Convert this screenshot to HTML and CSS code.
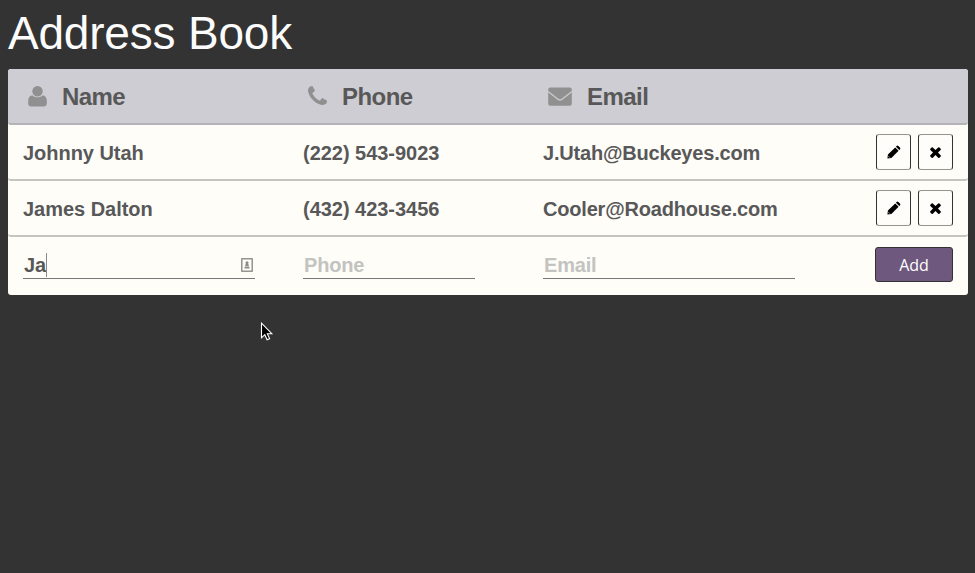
FILE: index.html
```html
<!DOCTYPE html>
<html lang="en">
<head>
<meta charset="utf-8">
<title>Address Book</title>
<link rel="stylesheet" href="styles.css">
</head>
<body>
<h1 class="title">Address Book</h1>
<main class="book">
  <div class="row head">
    <div class="heading"><svg class="icon user" viewBox="0 0 19 21"><circle cx="9.5" cy="5.3" r="5.2"/><path d="M4.2 9.2C1.300 9.700.2 12 .2 15v2.500c0 2 1.200 3 3.200 3h12.200c2 0 3.200-1 3.200-3V15c0-3-1.100-5.300-4-5.800-2.900 2.700-7.700 2.700-10.600 0z"/></svg><span class="label">Name</span></div>
    <div class="heading"><svg class="icon phone" viewBox="192 128 1408 1408"><path d="M1600 1240q0 27-10 70.500t-21 68.500q-21 50-122 106-94 51-186 51-27 0-53-3.500t-57.500-12.500-47-14.500-55.500-20.500-49-18q-98-35-175-83-127-79-264-216t-216-264q-48-77-83-175-3-9-18-49t-20.500-55.500-14.500-47-12.500-57.500-3.500-53q0-92 51-186 56-101 106-122 25-11 68.500-21t70.500-10q14 0 21 3 18 6 53 76 11 19 30 54t35 63.500 31 53.500q3 4 17.500 25t21.500 35.500 7 28.500q0 20-28.500 50t-62 55-62 53-28.500 46q0 9 5 22.500t8.500 20.500 14 24 11.500 19q76 137 174 235t235 174q2 1 19 11.500t24 14 20.500 8.500 22.500 5q18 0 46-28.500t53-62 55-62 50-28.500q14 0 28.500 7t35.500 21.500 25 17.500q25 15 53.500 31t63.500 35 54 30q70 35 76 53 3 7 3 21z"/></svg><span class="label">Phone</span></div>
    <div class="heading"><svg class="icon mail" viewBox="0 0 24 19"><rect x=".2" y=".4" width="23.600" height="18.300" rx="2"/><path class="flap" d="M0 4.500l10 7.700q2 1.500 4 0L24 4.500"/></svg><span class="label">Email</span></div>
  </div>
  <div class="row">
    <div class="cell">Johnny Utah</div><div class="cell">(222) 543-9023</div><div class="cell mailto">J.Utah@Buckeyes.com</div>
    <div class="actions">
      <button class="square" aria-label="Edit"><svg class="pencil" viewBox="0 0 14 14"><path d="M.4 13.600l.5-4 7.300-7.200 3.400 3.400-7.200 7.300zM8.900 1.700l.7-.7q.9-.8 1.800 0l1.600 1.600q.8.900 0 1.800l-.7.700z"/><path class="cut" d="M1.300 11.100l1.600 1.600"/></svg></button>
      <button class="square" aria-label="Delete"><svg class="cross" viewBox="302 238 1188 1316"><path d="M1490 1322q0 40-28 68l-136 136q-28 28-68 28t-68-28l-294-294-294 294q-28 28-68 28t-68-28l-136-136q-28-28-28-68t28-68l294-294-294-294q-28-28-28-68t28-68l136-136q28-28 68-28t68 28l294 294 294-294q28-28 68-28t68 28l136 136q28 28 28 68t-28 68l-294 294 294 294q28 28 28 68z"/></svg></button>
    </div>
  </div>
  <div class="row">
    <div class="cell">James Dalton</div><div class="cell">(432) 423-3456</div><div class="cell mailto">Cooler@Roadhouse.com</div>
    <div class="actions">
      <button class="square" aria-label="Edit"><svg class="pencil" viewBox="0 0 14 14"><path d="M.4 13.600l.5-4 7.300-7.200 3.400 3.400-7.200 7.300zM8.900 1.700l.7-.7q.9-.8 1.800 0l1.600 1.600q.8.900 0 1.800l-.7.700z"/><path class="cut" d="M1.300 11.100l1.600 1.600"/></svg></button>
      <button class="square" aria-label="Delete"><svg class="cross" viewBox="302 238 1188 1316"><path d="M1490 1322q0 40-28 68l-136 136q-28 28-68 28t-68-28l-294-294-294 294q-28 28-68 28t-68-28l-136-136q-28-28-28-68t28-68l294-294-294-294q-28-28-28-68t28-68l136-136q28-28 68-28t68 28l294 294 294-294q28-28 68-28t68 28l136 136q28 28 28 68t-28 68l-294 294 294 294q28 28 28 68z"/></svg></button>
    </div>
  </div>
  <div class="row form">
    <div class="field name"><span>Ja</span><i class="caret"></i><svg class="autofill" viewBox="0 0 12 14"><rect class="frame" x=".8" y=".8" width="10.400" height="12.400"/><circle cx="6" cy="4.700" r="1.500"/><path d="M4.700 6h2.600l.8 2.500H3.900zM3.500 9h5v1.500h-5z"/></svg></div>
    <div class="field tel">Phone</div>
    <div class="field email">Email</div>
    <div class="actions"><button class="add">Add</button></div>
  </div>
</main>
<svg class="pointer" viewBox="0 0 14 20"><path d="M1.500 1.200v14.600l3.300-3.100 2.300 5 2.500-1.100-2.300-4.900h4.500z"/></svg>
</body>
</html>
```
FILE: styles.css
```css
* { box-sizing: border-box; }
body {
  margin: 0;
  padding: 0 7px 0 8px;
  height: 573px;
  overflow: hidden;
  background: #333;
  color: #585858;
  font-family: "Liberation Sans", Arial, sans-serif;
}
.title {
  margin: 0;
  height: 69px;
  padding-top: 6px;
  color: #fcfcfc;
  font-size: 46px;
  line-height: 54px;
  font-weight: 400;
  letter-spacing: -.2px;
}
.book {
  height: 225.500px;
  overflow: hidden;
  border-radius: 3px;
  background: #fefdf8;
}
.row {
  display: grid;
  grid-template-columns: 280px 240px 280px 1fr;
  align-items: center;
  height: 56px;
  padding: 0 15px;
  border-bottom: 2px solid #c4c4c1;
  border-radius: 3px;
  font-size: 20px;
  font-weight: 700;
}
.head {
  background: #cecdd3;
  border-bottom-color: #b4b3b8;
  font-size: 24px;
}
.form { height: 57px; padding-bottom: 3px; border-bottom: 0; }
.cell { padding-top: 2px; letter-spacing: -.03px; }
.mailto { letter-spacing: -.19px; }
.heading { display: flex; align-items: center; }
.label { padding-top: 2px; letter-spacing: -.55px; }
.icon { display: block; fill: #909090; }
.user { width: 19px; height: 21px; margin: 0 15px 0 5px; }
.phone { width: 19px; height: 19px; margin: -2px 15px 0 5px; }
.mail { width: 24px; height: 19px; margin: 1px 15px 0 5px; }
.flap { fill: none; stroke: #cecdd3; stroke-width: 1.200; }
.actions { display: flex; justify-content: flex-end; gap: 7px; }
.square {
  display: grid;
  place-items: center;
  width: 35px;
  height: 36px;
  padding: 0;
  border: 1px solid #333;
  border-top-color: #96958f;
  border-bottom-color: #96958f;
  border-radius: 3px;
  background: #fefdfa;
}
.pencil { width: 14px; height: 14px; }
.cut { fill: none; stroke: #aaa; stroke-width: .8; }
.cross { width: 11px; height: 12px; }
.field {
  display: flex;
  align-items: center;
  height: 29px;
  padding: 4px 0 0 1px;
  border-bottom: 1px solid #777;
  color: #c3c3c0;
}
.name { width: 232px; color: #585858; }
.tel { width: 172px; letter-spacing: -.2px; }
.email { width: 252px; letter-spacing: -.2px; }
.caret { width: 1px; height: 24px; margin-top: -2px; background: #888; }
.autofill { width: 12px; height: 14px; margin: -2px 2px 0 auto; fill: #8c8c88; }
.frame { fill: none; stroke: #858581; stroke-width: 1.300; }
.add {
  width: 78px;
  height: 35px;
  padding: 1px 0 0;
  border: 1px solid #333;
  border-radius: 3px;
  background: #6e587e;
  color: #fff;
  font: 16px "Open Sans", sans-serif;
}
.pointer {
  position: absolute;
  left: 260px;
  top: 322px;
  width: 14px;
  height: 20px;
  fill: #000;
  stroke: #fff;
  stroke-width: 1.100;
}
```
